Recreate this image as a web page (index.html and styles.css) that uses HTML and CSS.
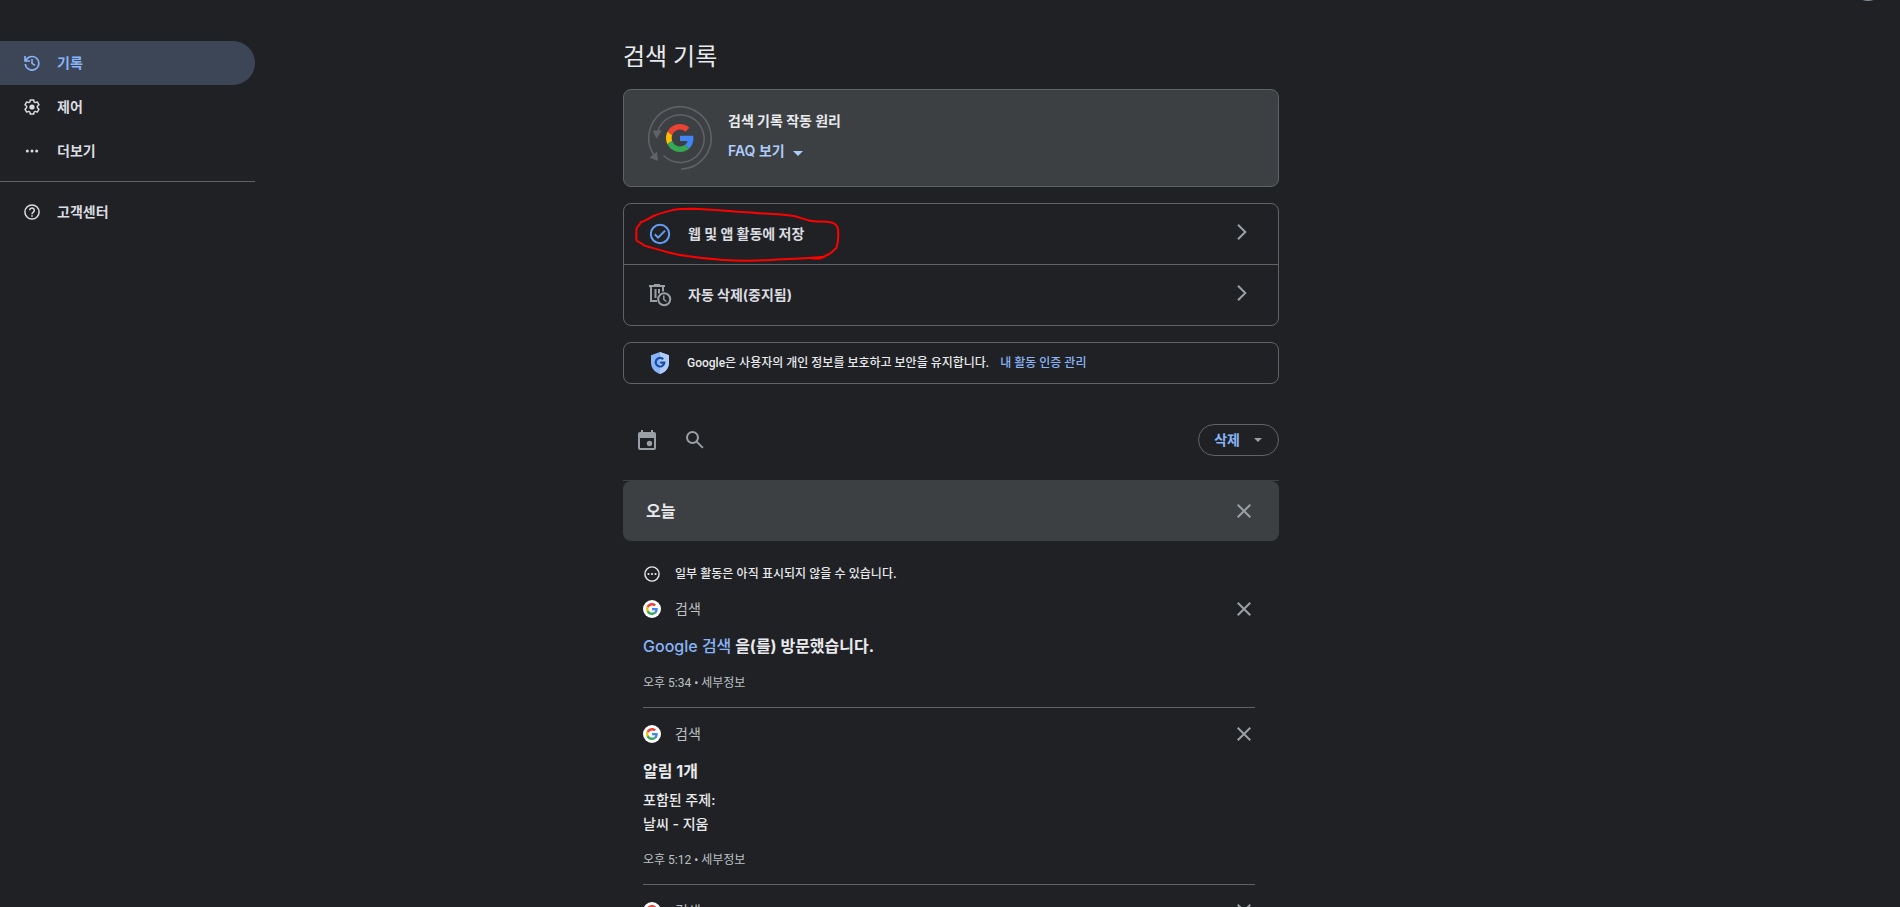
FILE: index.html
```html
<!DOCTYPE html>
<html lang="ko">

<head>
    <meta charset="UTF-8" />
    <title>검색 기록</title>
    <link rel="stylesheet" href="styles.css">
</head>

<body>
    <!-- 여러 번 쓰는 아이콘 -->
    <svg class="sprite" aria-hidden="true">
        <symbol id="google" viewBox="0 0 48 48">
            <path fill="#ea4335" d="M24 9.5c3.54 0 6.71 1.22 9.21 3.6l6.85-6.85C35.9 2.38 30.47 0 24 0 14.62 0 6.51 5.38 2.56 13.22l7.98 6.19C12.43 13.72 17.74 9.5 24 9.5z" />
            <path fill="#4285f4" d="M46.98 24.55c0-1.57-.15-3.09-.38-4.55H24v9.02h12.94c-.58 2.96-2.26 5.48-4.78 7.18l7.73 6c4.51-4.18 7.09-10.36 7.09-17.65z" />
            <path fill="#fbbc05" d="M10.53 28.59c-.48-1.45-.76-2.99-.76-4.59s.27-3.14.76-4.59l-7.98-6.19C.92 16.46 0 20.12 0 24c0 3.88.92 7.54 2.56 10.78l7.97-6.19z" />
            <path fill="#34a853" d="M24 48c6.48 0 11.93-2.13 15.89-5.81l-7.73-6c-2.15 1.45-4.92 2.3-8.16 2.3-6.26 0-11.57-4.22-13.47-9.91l-7.98 6.19C6.51 42.62 14.62 48 24 48z" />
        </symbol>
        <symbol id="close" viewBox="0 0 14 14">
            <path d="M.7.7l12.6 12.6M13.3.7L.7 13.3" fill="none" stroke="currentColor" stroke-width="2" />
        </symbol>
        <symbol id="chevron" viewBox="0 0 10 16">
            <path d="M1 .7L8.3 8 1 15.3" fill="none" stroke="currentColor" stroke-width="2" />
        </symbol>
    </svg>

    <div class="avatar"></div>

    <div class="page">
        <nav class="sidebar">
            <ul>
                <li>
                    <a class="nav-link active" href="#">
                        <svg class="nav-icon" viewBox="0 0 16 16">
                            <path d="M1.6 6.2A6.8 6.8 0 1 1 1.3 9M1 1v5h5" fill="none" stroke="currentColor" stroke-width="1.6" />
                            <path d="M8 4v4.4l3 2" fill="none" stroke="currentColor" stroke-width="1.6" />
                        </svg>
                        기록
                    </a>
                </li>
                <li>
                    <a class="nav-link" href="#">
                        <svg class="nav-icon" viewBox="0 0 16 16">
                            <path d="M6.3.9h3.4l.4 2 1.2.7 2-.7 1.7 2.9-1.6 1.4v1.6l1.6 1.4-1.7 2.9-2-.7-1.2.7-.4 2H6.3l-.4-2-1.2-.7-2 .7L1 10.2l1.6-1.4V7.2L1 5.8l1.7-2.9 2 .7 1.2-.7z" fill="none" stroke="currentColor" stroke-width="1.5" stroke-linejoin="round" />
                            <circle cx="8" cy="8" r="2.6" fill="currentColor" />
                        </svg>
                        제어
                    </a>
                </li>
                <li>
                    <a class="nav-link" href="#">
                        <svg class="nav-icon" viewBox="0 0 16 16" fill="currentColor">
                            <circle cx="3.3" cy="8" r="1.5" />
                            <circle cx="8" cy="8" r="1.5" />
                            <circle cx="12.7" cy="8" r="1.5" />
                        </svg>
                        더보기
                    </a>
                </li>
            </ul>
            <ul class="help">
                <li>
                    <a class="nav-link" href="#">
                        <svg class="nav-icon" viewBox="0 0 16 16" fill="none" stroke="currentColor" stroke-width="1.5">
                            <circle cx="8" cy="8" r="7.1" />
                            <path d="M5.7 6.3a2.3 2.3 0 1 1 3.7 1.8C8.5 8.7 8 9 8 10.2" />
                            <path d="M8 11.3v1.5" />
                        </svg>
                        고객센터
                    </a>
                </li>
            </ul>
        </nav>

        <main class="content">
            <h1>검색 기록</h1>

            <section class="card faq">
                <svg class="faq-logo" viewBox="0 0 64 64">
                    <g fill="none" stroke="#5f6368" stroke-width="1.5">
                        <path d="M33 63.2A31.2 31.2 0 1 0 5.5 48.5" />
                        <path d="M15.5 49.5A23.8 23.8 0 1 0 9.5 26" />
                    </g>
                    <path d="M4.5 24.5h9.5l-5.5 8zM1.5 51.5l7.5-6 1 9.500z" fill="#5f6368" />
                    <use href="#google" x="18" y="18" width="28" height="28" />
                </svg>
                <div class="faq-text">
                    <h2>검색 기록 작동 원리</h2>
                    <button class="faq-button" type="button">
                        FAQ 보기
                        <svg width="10" height="9" viewBox="0 0 10 9"><path d="M0 4h10L5 9z" fill="currentColor" /></svg>
                    </button>
                </div>
            </section>

            <section class="card settings">
                <a class="setting" href="#">
                    <svg class="setting-icon" viewBox="0 0 24 24" fill="none" stroke="#669df6" stroke-width="2">
                        <circle cx="12" cy="12" r="9.2" />
                        <path d="M6.8 12.3l3.3 3.3 7-7" />
                    </svg>
                    <span>웹 및 앱 활동에 저장</span>
                    <svg class="chevron"><use href="#chevron" /></svg>
                </a>
                <a class="setting" href="#">
                    <svg class="setting-icon" viewBox="0 0 24 24" fill="none" stroke="#9aa0a6" stroke-width="2">
                        <path d="M1 3h16M6 2h6M3 3.5V18h6M15 3.5v5M7.5 6v9M11 6v4.5" />
                        <circle cx="16.2" cy="16.3" r="6" />
                        <path d="M15.8 12.5v4l2.6 2" stroke-width="1.5" />
                    </svg>
                    <span>자동 삭제(중지됨)</span>
                    <svg class="chevron"><use href="#chevron" /></svg>
                </a>
                <!-- 손으로 그린 강조 표시 -->
                <svg class="mark" viewBox="69 45 624 171">
                    <path d="M92 97C90 108 80 105 79 120L79 150C82 158 95 157 102 166C125 175 150 178 170 186C220 200 270 204 330 209C390 213 440 213 490 209C550 205 600 206 640 200C660 195 666 186 679 174C684 160 686 140 684 118C682 104 672 98 658 96C640 93 620 96 600 92C580 88 565 78 535 76C490 71 450 71 410 67C350 63 300 58 250 56C220 56 200 57 188 60C165 66 145 71 130 78C115 86 112 90 92 97M604 205C630 207 636 206 652 194" />
                </svg>
            </section>

            <section class="card privacy">
                <svg class="shield" viewBox="0 0 18 22">
                    <path d="M9 0l9 3.3v7.2C18 16 14.2 20.5 9 22 3.8 20.5 0 16 0 10.5V3.3z" fill="#8ab4f8" />
                    <path d="M9 0l9 3.3v7.2C18 16 14.2 20.5 9 22z" fill="#aecbfa" />
                    <path d="M12.2 7.3A4.3 4.3 0 1 0 13.3 10.6H9.2" fill="none" stroke="#174ea6" stroke-width="2.2" />
                </svg>
                <p>Google은 사용자의 개인 정보를 보호하고 보안을 유지합니다. <a href="#">내 활동 인증 관리</a></p>
            </section>

            <div class="toolbar">
                <button class="icon-button" type="button" aria-label="날짜로 필터링">
                    <svg width="18" height="20" viewBox="0 0 18 20" fill="currentColor">
                        <path fill-rule="evenodd" d="M3 0h2v2h8V0h2v2h1a2 2 0 0 1 2 2v14a2 2 0 0 1-2 2H2a2 2 0 0 1-2-2V4a2 2 0 0 1 2-2h1zM2 8v10h14V8z" />
                        <circle cx="11.5" cy="13.5" r="2.7" />
                    </svg>
                </button>
                <button class="icon-button" type="button" aria-label="검색">
                    <svg width="18" height="18" viewBox="0 0 18 18" fill="none" stroke="currentColor" stroke-width="2">
                        <circle cx="6.5" cy="6.5" r="5.5" />
                        <path d="M10.6 10.6l6.3 6.3" />
                    </svg>
                </button>
                <button class="delete" type="button">
                    삭제
                    <svg width="8" height="4" viewBox="0 0 8 4"><path d="M0 0h8L4 4z" fill="#9aa0a6" /></svg>
                </button>
            </div>

            <div class="day-wrap">
                <div class="day">
                    <h2>오늘</h2>
                    <button class="close" type="button" aria-label="오늘 활동 삭제"><svg><use href="#close" /></svg></button>
                </div>
            </div>

            <p class="notice">
                <svg width="16" height="16" viewBox="0 0 16 16">
                    <circle cx="8" cy="8" r="7.1" fill="none" stroke="currentColor" stroke-width="1.4" />
                    <g fill="currentColor">
                        <circle cx="4.5" cy="8" r="1.1" />
                        <circle cx="8" cy="8" r="1.1" />
                        <circle cx="11.5" cy="8" r="1.1" />
                    </g>
                </svg>
                일부 활동은 아직 표시되지 않을 수 있습니다.
            </p>

            <article class="item">
                <header>
                    <span class="product"><svg><use href="#google" /></svg></span>
                    <span>검색</span>
                    <button class="close" type="button" aria-label="활동 항목 삭제"><svg><use href="#close" /></svg></button>
                </header>
                <h3><a href="#">Google 검색</a> 을(를) 방문했습니다.</h3>
                <p class="meta">오후 5:34 • <a href="#">세부정보</a></p>
            </article>

            <article class="item">
                <header>
                    <span class="product"><svg><use href="#google" /></svg></span>
                    <span>검색</span>
                    <button class="close" type="button" aria-label="활동 항목 삭제"><svg><use href="#close" /></svg></button>
                </header>
                <h3>알림 1개</h3>
                <p class="topics">포함된 주제:<br>날씨 - 지움</p>
                <p class="meta">오후 5:12 • <a href="#">세부정보</a></p>
            </article>

            <article class="item">
                <header>
                    <span class="product"><svg><use href="#google" /></svg></span>
                    <span>검색</span>
                    <button class="close" type="button" aria-label="활동 항목 삭제"><svg><use href="#close" /></svg></button>
                </header>
            </article>
        </main>
    </div>
</body>

</html>
```
FILE: styles.css
```css
*{
    margin: 0;
    padding: 0;
    box-sizing: border-box;
}

body{
    height: 100vh;
    overflow: hidden;
    position: relative;
    background-color: #202124;
    color: #e8eaed;
    font: 14px/20px Inter, "Noto Sans CJK KR", sans-serif;
}

a{
    color: #8ab4f8;
    text-decoration: none;
}

ul{
    list-style: none;
}

button{
    border: 0;
    background: none;
    color: inherit;
    font: inherit;
    cursor: pointer;
}

svg{
    flex: none;
}

.sprite{
    position: absolute;
    width: 0;
    height: 0;
}

/* 위로 스크롤되어 아래쪽 끝만 보임 */
.avatar{
    position: absolute;
    top: -31px;
    right: 16px;
    width: 32px;
    height: 32px;
    border-radius: 50%;
    background-color: #78909c;
}

.page{
    display: grid;
    grid-template-columns: 257px 1fr 255px;
}

/* 왼쪽 메뉴 */
.sidebar{
    width: 255px;
    padding-top: 41px;
}

.nav-link{
    display: flex;
    align-items: center;
    gap: 17px;
    height: 44px;
    padding-left: 24px;
    border-radius: 0 22px 22px 0;
    color: #dadce0;
    font-weight: 700;
}

.nav-link.active{
    background-color: #3c4657;
    color: #8ab4f8;
}

.nav-icon{
    width: 16px;
    height: 16px;
}

.help{
    margin-top: 8px;
    padding-top: 8px;
    border-top: 1px solid #5f6368;
}

/* 본문 */
.content{
    width: 100%;
    max-width: 656px;
    margin: 0 auto;
    padding-top: 41px;
}

h1{
    margin-bottom: 16px;
    font-family: Roboto, "Noto Sans CJK KR", sans-serif;
    font-size: 24px;
    line-height: 32px;
    font-weight: 400;
}

.card{
    margin-bottom: 16px;
    border: 1px solid #5f6368;
    border-radius: 8px;
}

.faq{
    display: flex;
    align-items: center;
    gap: 16px;
    height: 98px;
    padding-left: 24px;
    background-color: #3c4043;
}

.faq-logo{
    width: 64px;
    height: 64px;
}

.faq-text{
    padding-bottom: 4px;
}

.faq h2{
    margin-bottom: 10px;
    font-size: 14px;
    line-height: 20px;
}

.faq-button{
    display: flex;
    align-items: center;
    gap: 8px;
    color: #aecbfa;
    font-weight: 600;
}

.settings{
    position: relative;
}

.setting{
    display: flex;
    align-items: center;
    gap: 16px;
    height: 60px;
    padding: 0 31px 0 24px;
    color: #dadce0;
    font-weight: 700;
}

.setting + .setting{
    height: 61px;
    border-top: 1px solid #5f6368;
}

.setting-icon{
    width: 24px;
    height: 24px;
}

.chevron{
    width: 10px;
    height: 16px;
    margin-bottom: 4px;
    margin-left: auto;
    color: #9aa0a6;
}

.mark{
    position: absolute;
    left: 9px;
    top: 1px;
    width: 208px;
    height: 57px;
    fill: none;
    stroke: #f00;
    stroke-width: 6;
    stroke-linejoin: round;
    stroke-linecap: round;
}

.privacy{
    display: flex;
    align-items: center;
    gap: 18px;
    height: 42px;
    padding-left: 27px;
    font-family: Roboto, "Noto Sans CJK KR", sans-serif;
    font-size: 12px;
    font-weight: 500;
}

.privacy a{
    margin-left: 8px;
}

.shield{
    width: 18px;
    height: 22px;
}

.toolbar{
    display: flex;
    align-items: center;
    height: 80px;
}

.icon-button{
    display: flex;
    align-items: center;
    justify-content: center;
    width: 48px;
    height: 48px;
    color: #9aa0a6;
}

.delete{
    display: flex;
    align-items: center;
    gap: 14px;
    height: 32px;
    margin-left: auto;
    padding: 0 16px 0 15px;
    border: 1px solid #5f6368;
    border-radius: 16px;
    color: #8ab4f8;
    font-weight: 700;
}

.day-wrap{
    border-top: 1px solid #3c4043;
}

.day{
    display: flex;
    align-items: center;
    justify-content: space-between;
    height: 60px;
    padding: 0 28px 0 23px;
    border-radius: 8px;
    background-color: #3c4043;
}

.day h2{
    font-size: 16px;
    line-height: 24px;
    font-weight: 700;
}

.close{
    display: flex;
    color: #9aa0a6;
}

.close svg{
    width: 14px;
    height: 14px;
}

.notice{
    display: flex;
    align-items: center;
    gap: 15px;
    height: 20px;
    margin: 23px 0 0 21px;
    font-size: 12px;
    font-weight: 500;
}

/* 활동 항목 */
.item{
    margin: 0 24px 0 20px;
    padding: 16px 0 14px;
    border-bottom: 1px solid #5f6368;
}

.notice + .item{
    margin-top: -1px;
}

.item header{
    display: flex;
    align-items: center;
    gap: 14px;
    height: 20px;
    color: #bdc1c6;
}

.item .close{
    margin-left: auto;
    padding-right: 4px;
}

.product{
    display: flex;
    align-items: center;
    justify-content: center;
    width: 18px;
    height: 18px;
    border-radius: 50%;
    background-color: #fff;
}

.product svg{
    width: 12px;
    height: 12px;
}

.item h3{
    margin: 15px 0 1px;
    font-size: 16px;
    line-height: 24px;
    font-weight: 700;
}

.item h3 a{
    font-weight: 500;
}

.topics{
    padding-top: 4px;
    line-height: 24px;
    font-weight: 500;
}

.meta{
    padding-top: 14px;
    color: #bdc1c6;
    font-family: Roboto, "Noto Sans CJK KR", sans-serif;
    font-size: 12px;
    line-height: 20px;
}

.meta a{
    color: inherit;
}
```
